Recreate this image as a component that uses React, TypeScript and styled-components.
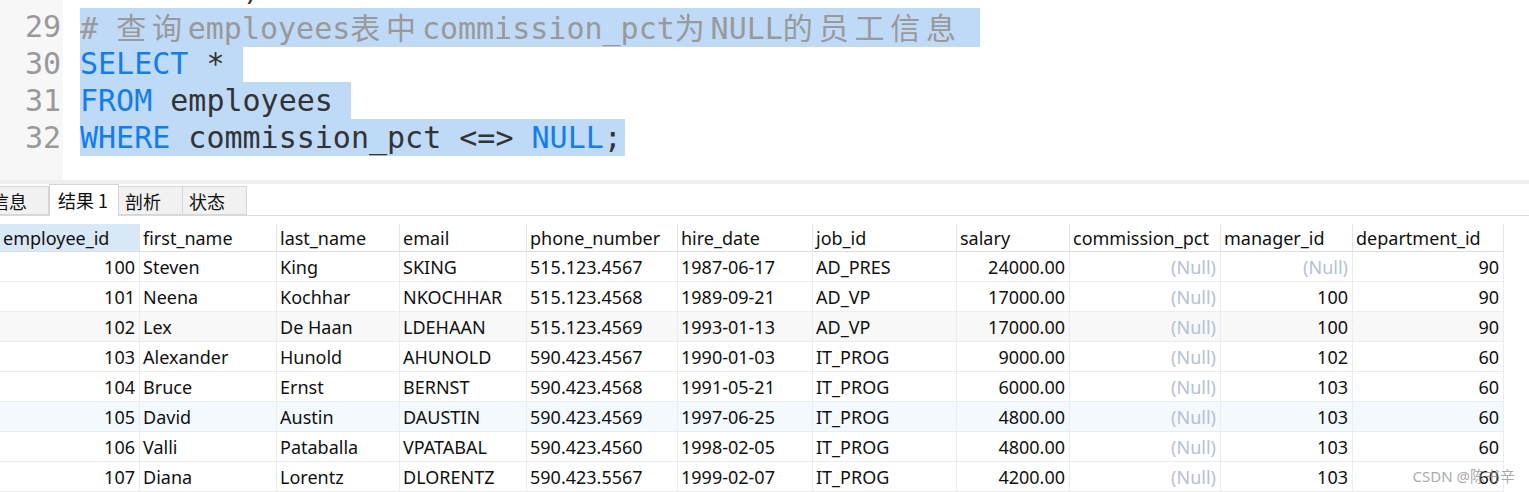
import React from "react";
import styled, { createGlobalStyle } from "styled-components";

const Global = createGlobalStyle`
  html, body { margin: 0; padding: 0; background: #ffffff; }
  body { width: 1529px; height: 492px; overflow: hidden; }
  #root { position: relative; width: 1529px; height: 492px; overflow: hidden; }
`;

const Page = styled.div`
  display: flex;
  flex-direction: column;
  width: 1529px;
  height: 492px;
  overflow: hidden;
  position: relative;
`;

const Editor = styled.div`
  display: flex;
  height: 182px;
  overflow: hidden;
  font-family: "DejaVu Sans Mono", "Noto Sans CJK SC", monospace;
  font-size: 30px;
`;

const Gutter = styled.div`
  width: 63px;
  flex: none;
  background: #f7f7f7;
  color: #999999;
  text-align: right;
  padding-right: 2px;
  box-sizing: border-box;
`;

const Code = styled.div`
  flex: 1;
  padding-left: 17px;
`;

const Line = styled.div<{ $first?: boolean }>`
  height: 37px;
  line-height: 37px;
  white-space: pre;
  margin-top: ${(p) => (p.$first ? "-29px" : "0")};
`;

const Sel = styled.span<{ $nl?: boolean }>`
  display: inline-block;
  background: #bfdaf7;
  padding-right: ${(p) => (p.$nl ? "18px" : "3px")};
`;

const Kw = styled.span`
  color: #0f7ef5;
`;
const Txt = styled.span`
  color: #333333;
`;
const Comment = styled.span`
  color: #999999;
`;
const Cjk = styled.span`
  font-family: "Noto Sans CJK SC", sans-serif;
  letter-spacing: 5.8px;
`;

const Splitter = styled.div`
  height: 4px;
  background: #efefef;
  flex: none;
`;

const TabBar = styled.div`
  display: flex;
  align-items: flex-end;
  height: 31px;
  margin-left: -15px;
  border-bottom: 1px solid #dadada;
  font-family: "Noto Sans CJK SC", "Noto Sans", sans-serif;
  font-size: 18px;
  color: #111111;
  flex: none;
`;

const Tab = styled.div<{ $active?: boolean }>`
  box-sizing: border-box;
  height: ${(p) => (p.$active ? "32px" : "29px")};
  margin-bottom: ${(p) => (p.$active ? "-1px" : "0")};
  min-width: ${(p) => (p.$active ? "69px" : "64px")};
  padding-left: ${(p) => (p.$active ? "8px" : "6px")};
  padding-right: ${(p) => (p.$active ? "10px" : "6px")};
  padding-bottom: ${(p) => (p.$active ? "2px" : "0")};
  background: ${(p) => (p.$active ? "#ffffff" : "#f1f1f1")};
  border: 1px solid #d6d6d6;
  border-bottom: ${(p) => (p.$active ? "none" : "1px solid #d6d6d6")};
  border-left: ${(p) => (p.$active ? "1px solid #d6d6d6" : "none")};
  display: flex;
  align-items: center;
  white-space: pre;
`;

const Grid = styled.div`
  margin-top: 8px;
  width: 1504px;
  font-family: "Noto Sans", "Noto Sans CJK SC", sans-serif;
  font-size: 18px;
  color: #111111;
`;

const cols = "140px 137px 123px 127px 151px 135px 144px 113px 151px 132px 151px";

const HeadRow = styled.div`
  display: grid;
  grid-template-columns: ${cols};
  height: 28px;
  border-bottom: 1px solid #dedede;
  box-sizing: border-box;
`;

const HeadCell = styled.div<{ $sel?: boolean }>`
  background: ${(p) => (p.$sel ? "#d9e8f7" : "#ffffff")};
  border-right: 1px solid #e4e4e4;
  padding-left: 3px;
  line-height: 29px;
  white-space: nowrap;
  overflow: hidden;
`;

const Row = styled.div<{ $bg: string }>`
  display: grid;
  grid-template-columns: ${cols};
  height: 30px;
  background: ${(p) => p.$bg};
  border-bottom: 1px solid #ececec;
  box-sizing: border-box;
`;

const Cell = styled.div<{ $right?: boolean; $null?: boolean }>`
  border-right: 1px solid #ececec;
  padding: 0 ${(p) => (p.$right ? "4px" : "3px")};
  text-align: ${(p) => (p.$right ? "right" : "left")};
  color: ${(p) => (p.$null ? "#b6c0d6" : "#111111")};
  line-height: 31px;
  white-space: nowrap;
  overflow: hidden;
`;

const Watermark = styled.div`
  position: absolute;
  right: 14px;
  bottom: 6px;
  font-family: "Noto Sans", "Noto Sans CJK SC", sans-serif;
  font-size: 15px;
  color: rgba(140, 140, 140, 0.75);
  white-space: pre;
`;

const headers = [
  "employee_id",
  "first_name",
  "last_name",
  "email",
  "phone_number",
  "hire_date",
  "job_id",
  "salary",
  "commission_pct",
  "manager_id",
  "department_id",
];

const rightCols = new Set([0, 7, 8, 9, 10]);

const N = null;
const rows: (string | null)[][] = [
  ["100", "Steven", "King", "SKING", "515.123.4567", "1987-06-17", "AD_PRES", "24000.00", N, N, "90"],
  ["101", "Neena", "Kochhar", "NKOCHHAR", "515.123.4568", "1989-09-21", "AD_VP", "17000.00", N, "100", "90"],
  ["102", "Lex", "De Haan", "LDEHAAN", "515.123.4569", "1993-01-13", "AD_VP", "17000.00", N, "100", "90"],
  ["103", "Alexander", "Hunold", "AHUNOLD", "590.423.4567", "1990-01-03", "IT_PROG", "9000.00", N, "102", "60"],
  ["104", "Bruce", "Ernst", "BERNST", "590.423.4568", "1991-05-21", "IT_PROG", "6000.00", N, "103", "60"],
  ["105", "David", "Austin", "DAUSTIN", "590.423.4569", "1997-06-25", "IT_PROG", "4800.00", N, "103", "60"],
  ["106", "Valli", "Pataballa", "VPATABAL", "590.423.4560", "1998-02-05", "IT_PROG", "4800.00", N, "103", "60"],
  ["107", "Diana", "Lorentz", "DLORENTZ", "590.423.5567", "1999-02-07", "IT_PROG", "4200.00", N, "103", "60"],
];

const rowBg = ["#ffffff", "#ffffff", "#f8f8f8", "#ffffff", "#ffffff", "#f4f9fe", "#ffffff", "#ffffff"];

export default function App() {
  return (
    <Page>
      <Global />
      <Editor>
        <Gutter>
          <Line $first>28</Line>
          <Line>29</Line>
          <Line>30</Line>
          <Line>31</Line>
          <Line>32</Line>
        </Gutter>
        <Code>
          <Line $first>
            <Txt>{"         )"}</Txt>
          </Line>
          <Line>
            <Sel $nl>
              <Comment>
                {"# "}
                <Cjk>查询</Cjk>
                {"employees"}
                <Cjk>表中</Cjk>
                {"commission_pct"}
                <Cjk>为</Cjk>
                {"NULL"}
                <Cjk>的员工信息</Cjk>
              </Comment>
            </Sel>
          </Line>
          <Line>
            <Sel $nl>
              <Kw>SELECT</Kw>
              <Txt>{" *"}</Txt>
            </Sel>
          </Line>
          <Line>
            <Sel $nl>
              <Kw>FROM</Kw>
              <Txt>{" employees"}</Txt>
            </Sel>
          </Line>
          <Line>
            <Sel>
              <Kw>WHERE</Kw>
              <Txt>{" commission_pct <=> "}</Txt>
              <Kw>NULL</Kw>
              <Txt>;</Txt>
            </Sel>
          </Line>
        </Code>
      </Editor>
      <Splitter />
      <TabBar>
        <Tab>信息</Tab>
        <Tab $active>结果 1</Tab>
        <Tab>剖析</Tab>
        <Tab>状态</Tab>
      </TabBar>
      <Grid>
        <HeadRow>
          {headers.map((h, i) => (
            <HeadCell key={h} $sel={i === 0}>
              {h}
            </HeadCell>
          ))}
        </HeadRow>
        {rows.map((r, ri) => (
          <Row key={ri} $bg={rowBg[ri]}>
            {r.map((v, ci) => (
              <Cell key={ci} $right={rightCols.has(ci)} $null={v === null}>
                {v === null ? "(Null)" : v}
              </Cell>
            ))}
          </Row>
        ))}
      </Grid>
      <Watermark>CSDN @陈书辛</Watermark>
    </Page>
  );
}
